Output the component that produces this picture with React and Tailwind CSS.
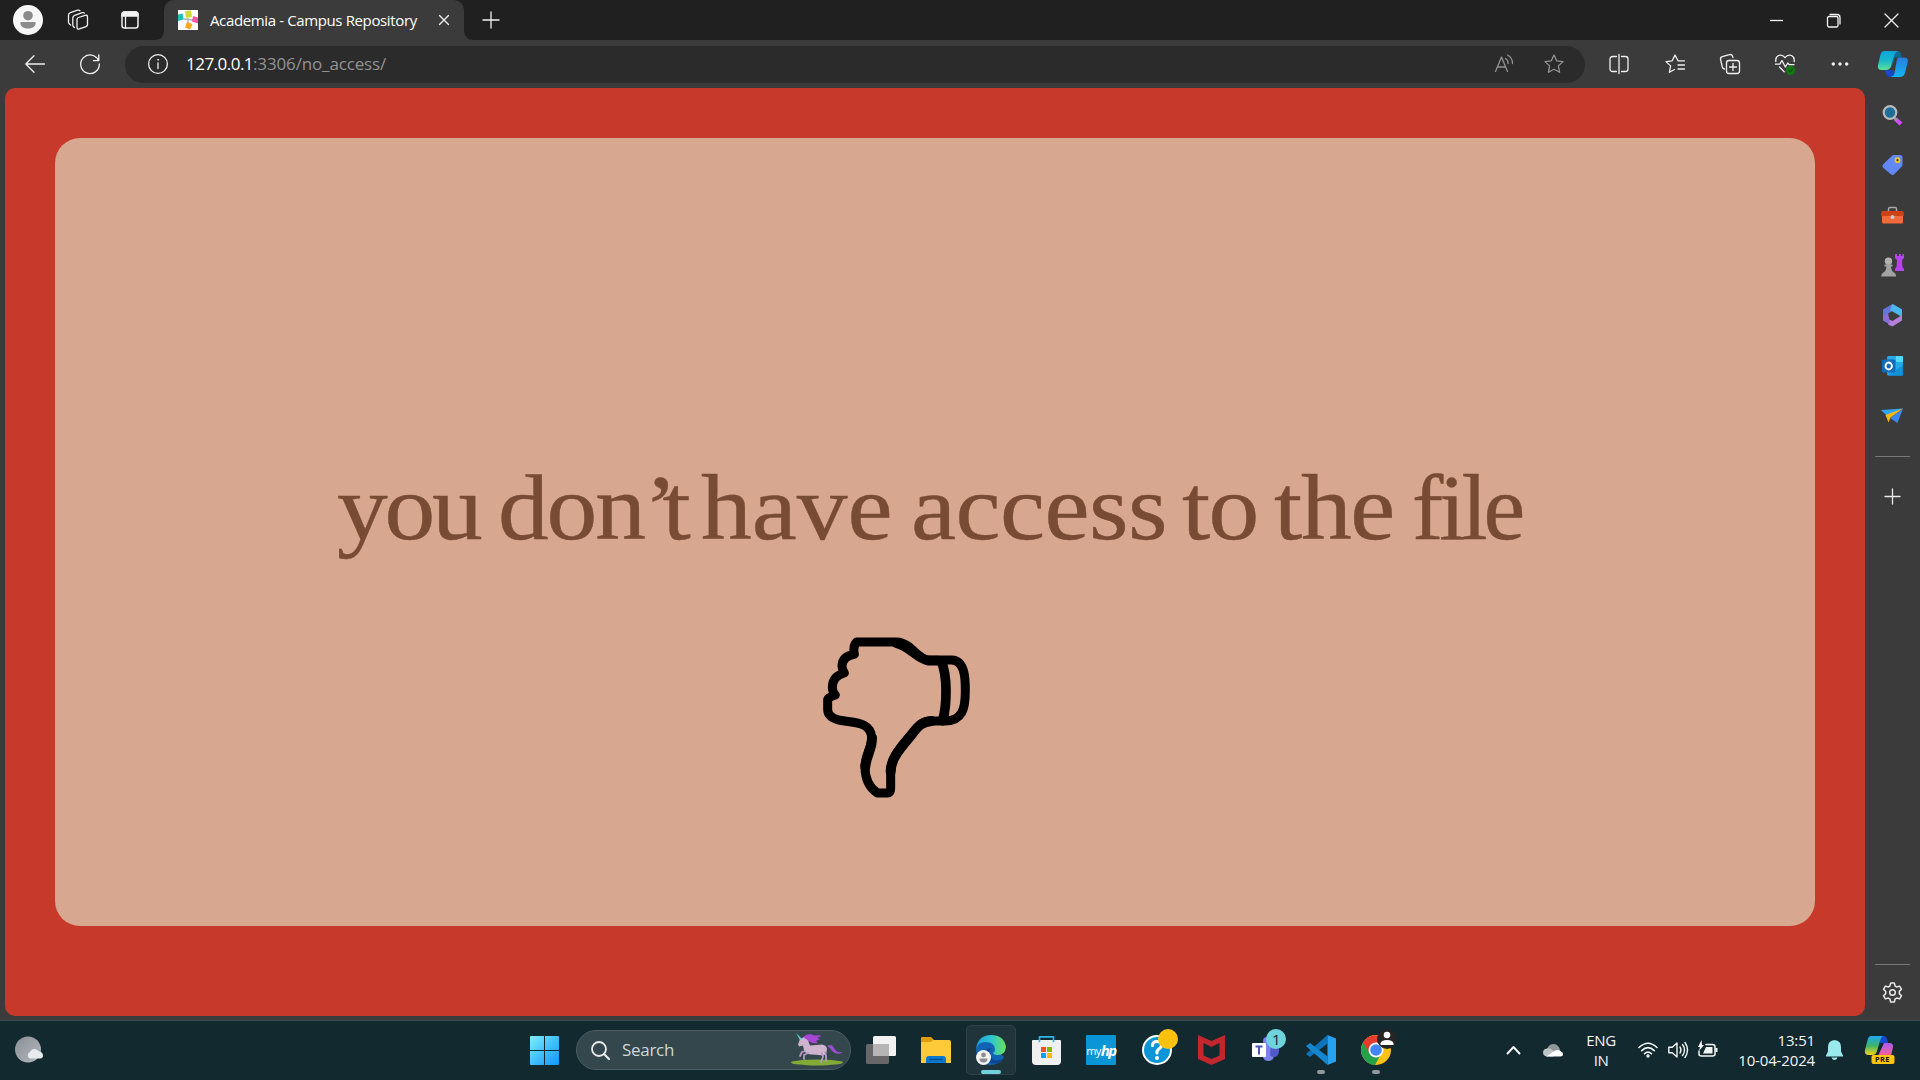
import React from "react";

const Icon = ({ w = 24, h = w, box, className = "", children }) => (
  <svg
    width={w}
    height={h}
    viewBox={box || `0 0 ${w} ${h}`}
    fill="none"
    stroke="currentColor"
    strokeWidth="1.3"
    strokeLinecap="round"
    strokeLinejoin="round"
    className={"block shrink-0 overflow-visible " + className}
  >
    {children}
  </svg>
);

const Slot = ({ className = "", children }) => (
  <div className={"flex shrink-0 items-center justify-center " + className}>{children}</div>
);

function TabStrip() {
  return (
    <header className="flex h-10 shrink-0 bg-[#202020] text-[#f2f2f2]">
      <Slot className="ml-[12px] w-[31px]">
        <Icon w={30}>
          <g stroke="none">
            <circle cx="15" cy="15" r="15" fill="#f7f7f7" />
            <circle cx="15" cy="10.7" r="4.8" fill="#8b8b8b" />
            <path d="M7.5 17h15v1.500c0 3.500-3.500 5-7.500 5s-7.500-1.500-7.500-5z" fill="#8b8b8b" />
          </g>
        </Icon>
      </Slot>
      <Slot className="w-[69px]">
        <Icon w={22}>
          <path d="M10 10.500q0-1.500 1.400-2l6.700-2.200q2.400-.7 2.400 1.700v7.600q0 1.500-1.500 2l-6.600 2.300q-2.400.700-2.400-1.600z" />
          <path d="M7.500 18.500l-.6-.4q-1.100-.7-1.100-2V9q0-2 1.900-2.700l7.500-2.600q1.500-.4 2.200.4" />
          <path d="M3.600 16l-1.100-.9q-1-.8-1-2.100V6.500q0-2.100 1.900-2.800l7.200-2.500q1.500-.4 2.300.5" />
        </Icon>
      </Slot>
      <Slot className="w-[36px]">
        <Icon w={18}>
          <rect x="1" y="1" width="16" height="16" rx="2.500" strokeWidth="1.500" />
          <path d="M1 5V3.500A2.500 2.500 0 0 1 3.500 1h11A2.500 2.500 0 0 1 17 3.500V5z" fill="currentColor" />
          <path d="M4.500 5v12" />
        </Icon>
      </Slot>
      <div className="ml-[6px] flex w-[320px] items-end">
        <Icon w={10} className="text-[#3b3b3b]">
          <path d="M0 10Q10 10 10 0V10z" fill="currentColor" stroke="none" />
        </Icon>
        <div className="flex h-10 w-[300px] items-center rounded-t-[10px] bg-[#3b3b3b] pl-[14px]">
          <Icon w={20}>
            <g stroke="none">
              <path fill="#fff" d="M0 0h20v20H0z" />
              <path d="M6 9l9 1M10 9v4" stroke="#aab4b8" strokeWidth="1.500" />
              <path d="M7 1l6-.5L14 7 8 8z" fill="#cddc39" />
              <path d="M0 4.500l4.500-1 1 6L0 11z" fill="#19c2bd" />
              <path d="M15 6l5 1.500v6l-6-2z" fill="#f857a6" />
              <path d="M9 12l5.500 2-2.500 5.500-5-2z" fill="#f9a61c" />
            </g>
          </Icon>
          <span className="ml-[12px] w-[208px] whitespace-nowrap text-[15px] leading-5 tracking-[-0.37px] text-white">
            Academia - Campus Repository
          </span>
          <Icon w={10} className="ml-[21px]">
            <path d="M.5.500l9 9M9.500.500l-9 9" />
          </Icon>
        </div>
        <Icon w={10} className="text-[#3b3b3b]">
          <path d="M0 0Q0 10 10 10H0z" fill="currentColor" stroke="none" />
        </Icon>
      </div>
      <Slot className="w-[34px]">
        <Icon w={16}>
          <path d="M8 0v16M0 8h16" />
        </Icon>
      </Slot>
      <div className="ml-auto flex">
        <Slot className="w-[56px]">
          <Icon w={13}><path d="M0 6.500h13" strokeLinecap="butt" /></Icon>
        </Slot>
        <Slot className="w-[58px]">
          <Icon w={13}>
            <rect x=".5" y="2.500" width="10.500" height="10.500" rx="1.500" />
            <path d="M3 .5h7q3 0 3 3V10" />
          </Icon>
        </Slot>
        <Slot className="w-[58px]">
          <Icon w={13}><path d="M0 0l13 13M13 0L0 13" /></Icon>
        </Slot>
      </div>
    </header>
  );
}

const star = "M10 1l2.700 5.800 6.300.8-4.600 4.300 1.200 6.400L10 15.200l-5.600 3.100 1.200-6.400L1 7.600l6.300-.8z";

function Toolbar() {
  return (
    <div className="flex h-12 shrink-0 items-center bg-[#3b3b3b] text-[#f0f0f0]">
      <Slot className="ml-[12px] w-[46px]">
        <Icon w={20} h={18}><path d="M19.500 9H1M9 .8L.8 9 9 17.200" /></Icon>
      </Slot>
      <Slot className="ml-[8px] w-[48px]">
        <Icon w={20}>
          <path d="M18.500 6.500A9.300 9.300 0 1 0 19.300 10M18.800 1v5.600h-5.400" />
        </Icon>
      </Slot>
      <div className="ml-[11px] flex h-[37px] w-[1460px] items-center rounded-full bg-[#2b2b2b]">
        <Icon w={20} className="ml-[23px]">
          <circle cx="10" cy="10" r="9.400" />
          <path d="M10 8.800v5.700" />
          <circle cx="10" cy="5.800" r=".5" fill="currentColor" strokeWidth=".8" />
        </Icon>
        <span className="ml-[18px] text-[17px] leading-6 tracking-[-0.52px] text-white">
          127.0.0.1<span className="tracking-[-0.15px] text-[#929292]">:3306/no_access/</span>
        </span>
        <div className="ml-auto mr-[6px] flex text-[#929292]">
          <Slot className="w-[50px]">
            <Icon w={20}>
              <path d="M1.500 17.500L7.500 3l6 14.500M3.400 13h8.200M11.500 4.500q3 2 2.600 5M13.500 1q5.300 3 5 8.500" />
            </Icon>
          </Slot>
          <Slot className="w-[50px]">
            <Icon w={20}><path d={star} /></Icon>
          </Slot>
        </div>
      </div>
      <Slot className="ml-[6px] w-[56px]">
        <Icon w={20}>
          <path d="M7.500 2.500H3.500a2.500 2.500 0 0 0-2.500 2.500v10a2.500 2.500 0 0 0 2.500 2.500h4M12.500 2.500h4A2.500 2.500 0 0 1 19 5v10a2.500 2.500 0 0 1-2.500 2.500h-4M10 .5v19" />
        </Icon>
      </Slot>
      <Slot className="w-[55px]">
        <Icon w={20}>
          <path d="M19.500 6.800H13L10 1 7.200 6.800 1 7.600l4.600 4.300-1.200 6.400 5.100-2.800M13 11h6.500M13 15h6.500" />
        </Icon>
      </Slot>
      <Slot className="w-[55px]">
        <Icon w={20}>
          <rect x="6.500" y="6.500" width="13" height="13" rx="2.500" />
          <path d="M13 9.500v7M9.500 13h7M4.500 15q-1.700-.3-2.200-2L.6 5.600q-.5-2.300 1.700-2.900L9.400.6q2.500-.5 3.200 1.700l.4 1.300" />
        </Icon>
      </Slot>
      <Slot className="w-[55px]">
        <Icon w={20}>
          <path d="M.8 7.500Q.3 3 3.500 1.500 7.300.3 10 3.700 12.700.3 16.500 1.500 19.700 3 19.200 7.500M.5 10.200h4.300L7 6.500l3.300 6.500 2.500-4 1.400 1.700H19M4.500 13l4.700 4.800" />
          <circle cx="15.500" cy="16.500" r="4.500" fill="#107c10" stroke="none" />
          <path d="M13.600 16.600l1.300 1.300 2.600-2.700" stroke="#0a4f0a" />
        </Icon>
      </Slot>
      <Slot className="w-[55px]">
        <Icon w={18} h={4}>
          <g fill="currentColor" stroke="none">
            <circle cx="2.300" cy="2" r="1.700" /><circle cx="9" cy="2" r="1.700" /><circle cx="15.700" cy="2" r="1.700" />
          </g>
        </Icon>
      </Slot>
      <Slot className="w-[51px]">
        <Icon w={30} h={28}>
          <defs>
            <linearGradient id="cpA" x1="0" y1="0" x2="0" y2="1"><stop stopColor="#0aa4dc" /><stop offset=".5" stopColor="#1bb7c8" /><stop offset="1" stopColor="#5fe09a" /></linearGradient>
            <linearGradient id="cpB" x1="0" y1="0" x2="0" y2="1"><stop stopColor="#2a7de1" /><stop offset="1" stopColor="#12b5f5" /></linearGradient>
          </defs>
          <g stroke="none">
            <path d="M9 1h10q3 0 4 3l1 3.500h-7L13 19z" fill="#0a6a96" />
            <path d="M7 20h9l-1 7h-3q-3 0-4-3z" fill="#1648c8" />
            <path d="M6 1h14q-3 1-4 5l-3 10q-1 4-5 4H3q-4-.5-3-5L2.500 4.500Q3.500 1 6 1z" fill="url(#cpA)" />
            <path d="M20.500 7.500H27q3.500.5 2.700 4.500L27 23q-1.300 4-5 4h-9.500q3-.5 4-4l2-11q.5-4 2-4.500z" fill="url(#cpB)" />
          </g>
        </Icon>
      </Slot>
    </div>
  );
}

const sideIcons = [
  <g key="search">
    <path d="M13.500 14l5.500 5" stroke="#d24bfa" strokeWidth="4" strokeLinecap="butt" />
    <path d="M12 12.500l2 2" stroke="#999" strokeWidth="2.500" />
    <circle cx="8" cy="7.500" r="6.300" fill="#1d6f9a" stroke="#b9b9b9" strokeWidth="2.200" />
  </g>,
  <g key="tag" stroke="none">
    <path d="M12 0h6q2.500 0 2.500 2.500v7q0 1.200-1 2.200l-7.300 7.600q-1.700 1.400-3.400 0L1 12.500q-1.200-1.500 0-3L9.500 1.200Q10.500 0 12 0z" fill="#6288f8" />
    <circle cx="15.500" cy="5.200" r="2.900" fill="#f5c518" /><circle cx="15.500" cy="5.200" r="1.100" fill="#283a6d" />
  </g>,
  <g key="case" stroke="none">
    <path d="M6.500 6V4q0-1.500 1.500-1.500h5q1.500 0 1.500 1.500v2" stroke="#aaa" strokeWidth="1.500" />
    <rect x="0" y="8.500" width="21" height="10" rx="1.500" fill="#f06a3c" />
    <path d="M-.8 8q0-2 1.500-2h19.600q1.500 0 1.500 2v3h-22.600z" fill="#cf4117" />
    <circle cx="10.500" cy="12" r="2" fill="#ccc" />
  </g>,
  <g key="games" stroke="none">
    <path d="M13-1h2v2h2v-2h2v2h1.500v-2H22v4l-2 2 .5 7 1.500 2v2h-9v-2l1.500-2L15 5l-2-2z" fill="#b644ef" />
    <circle cx="6.500" cy="6.200" r="3.700" fill="#b0b0b0" />
    <path d="M2.500 9.500h8v2h-1.500q0 4 3 6 2.200 1 2.200 4H-.8q0-3 2.200-4 3-2 3-6H2.500z" fill="#a2a2a2" />
  </g>,
  <g key="m365" stroke="none">
    <path d="M10.500-1L1 4.500v11L6 18V8.500L10.500 6l9.500 5V4.500z" fill="#6178d8" />
    <path d="M10.500-1L20 4.500V12L8 5z" fill="#4bb7ee" />
    <path d="M6 14v5.500l4.500 2L20 15.500V10L10.500 16z" fill="#b57fd9" />
    <path d="M1 12.500v3l6.500 3.800V15L6 8 1 12z" fill="#8a6cd6" />
  </g>,
  <g key="outlook" stroke="none">
    <rect x="5" y="0" width="16" height="19.500" rx="1.500" fill="#28a8ea" />
    <path d="M14 0h6q1 0 1 1v5h-7z" fill="#50d9ff" />
    <path d="M21 9v9.500q0 1-1 1H6l10-7z" fill="#1490df" />
    <rect x="0" y="3.500" width="13.500" height="13" rx="1.500" fill="#0f6cbd" />
    <ellipse cx="6.700" cy="10" rx="3.200" ry="3.500" stroke="#fff" strokeWidth="1.900" />
  </g>,
  <g key="plane" stroke="none">
    <path d="M-1 4L21 2.500 6 11z" fill="#2fa5ef" />
    <path d="M21 2.500L15.500 17 8 12z" fill="#3b87ef" />
    <path d="M21 2.500L3.500 9l3 7.500 2-5z" fill="#f4b912" />
  </g>,
];

function Sidebar() {
  return (
    <aside className="flex w-[55px] shrink-0 flex-col items-center bg-[#3b3b3b] pt-[1.500px] text-[#e8e8e8]">
      <div className="flex flex-col">
        {sideIcons.map((icon, i) => (
          <div key={i} className="flex h-[50.200px] items-center justify-center">
            <Icon w={21} h={20}>{icon}</Icon>
          </div>
        ))}
      </div>
      <div className="mt-[15px] h-px w-[35px] bg-[#777]" />
      <Icon w={15} className="mt-[32px]"><path d="M7.500 0v15M0 7.500h15" /></Icon>
      <div className="mt-auto h-px w-[35px] bg-[#777]" />
      <Icon w={21} className="mb-[17px] mt-[17px]">
        <path d="M8.700 1h3.600l.8 3q.9.400 1.600 1l2.900-.9 1.900 3.200-2.200 2.100v2.200l2.200 2.100-1.900 3.200-2.900-.9q-.7.600-1.600 1l-.8 3H8.700l-.8-3q-.9-.4-1.600-1l-2.900.9-1.900-3.200 2.200-2.100V9.400L1.500 7.300l1.900-3.200 2.900.9q.7-.6 1.600-1z" strokeWidth="1.500" />
        <circle cx="10.500" cy="10.500" r="2.800" strokeWidth="1.500" />
      </Icon>
    </aside>
  );
}

function Page() {
  return (
    <main className="ml-[5px] h-[928px] w-[1860px] shrink-0 rounded-[10px] bg-[#c7392b] px-[50px] pt-[50px]">
      <section className="flex h-[788px] w-[1760px] flex-col rounded-[25px] bg-[#d8a78f]">
        <h1 className="mt-[314px] flex h-[110px] whitespace-nowrap pl-[282px] font-['Liberation_Serif',serif] text-[94px] leading-[110px] text-[#784b34] [-webkit-text-stroke:0.4px_#784b34]">
          <span className="w-[161px] origin-left scale-x-[1.08] tracking-[-3px]">you</span>
          <span className="w-[203px] origin-left scale-x-[1.08] tracking-[-2px]">
            don<span className="tracking-[-14px]">’</span>t
          </span>
          <span className="w-[210px] origin-left scale-x-[1.08]">have</span>
          <span className="w-[271px] origin-left scale-x-[1.08] tracking-[-0.500px]">access</span>
          <span className="w-[92px] origin-left scale-x-[1.08] tracking-[-1.500px]">to</span>
          <span className="w-[138px] origin-left scale-x-[1.08] tracking-[-1.200px]">the</span>
          <span className="tracking-[-4px]">file</span>
        </h1>
        <Icon w={190} box="0 0 570 570" className="ml-[745px] mt-[58px] text-black">
          <g strokeWidth="27">
            <path d="M170 66H290C335 68 350 118 385 120H455C495 122 496 175 496 212C496 265 488 303 435 303H395C362 303 352 322 330 348C300 384 272 415 272 455V505Q272 519 262 519H232C204 500 195 470 195 440C196 400 215 385 215 353C213 300 150 310 112 299C92 293 83 284 83 268V238Q84 232 106 225Q97 214 97 203Q97 168 133 159Q126 148 126 138Q127 108 163 103Q158 78 170 66Z" />
            <path d="M424 124C442 165 442 250 428 302" strokeWidth="29" />
            <path d="M290 70C328 78 350 116 385 122H415" strokeWidth="29" />
            <path d="M395 303C362 305 352 322 330 350C300 386 272 417 272 455M196 440C199 405 216 390 216 353" strokeWidth="30" />
          </g>
        </Icon>
      </section>
    </main>
  );
}

function Unicorn() {
  return (
    <Icon w={53} h={34}>
      <g stroke="none">
        <ellipse cx="27" cy="29.500" rx="26" ry="3" fill="#83a936" />
        <path d="M12 5Q18-1 24 2.500q7-1 7 1-3 .3-4 1.500l3 1-4 2 2 2q-7 1-13-4z" fill="#a846d6" />
        <path d="M37 13q5-3 7 2t9 4q-3 3-8 1-4-2-5-5z" fill="#9b4fd0" />
        <path d="M10 6l4-1.500 4 3 2 5 12-1q5 1 5 5l-1 5-3 1q-7-1-12-1-6-1-7-4l-1-5-4 1-1-2z" fill="#cfb4d0" />
        <path d="M15 18l-3 1-2 4M18 20l-4 2 0 4M32 20l1 4-2 5M35 19l1 4 0 5" stroke="#b79ac6" strokeWidth="1.800" />
        <path d="M6 0l4 7 2-1z" fill="#62d8df" />
      </g>
    </Icon>
  );
}

function Taskbar() {
  return (
    <footer className="flex h-[60px] shrink-0 items-center border-t border-[#3c4b50] bg-[#12292f] pb-px text-[#f3f5f5]">
      <Icon w={30} h={28} className="ml-[14px]">
        <defs>
          <linearGradient id="moon" x1="0" x2="1" y2="1"><stop stopColor="#8b9097" /><stop offset="1" stopColor="#b2b6bd" /></linearGradient>
          <linearGradient id="win" x1="0" x2="1" y2="1"><stop stopColor="#7df1ff" /><stop offset=".5" stopColor="#42c0fb" /><stop offset="1" stopColor="#1296f8" /></linearGradient>
          <linearGradient id="edge" x1="0" x2="1"><stop stopColor="#1a9ee0" /><stop offset=".5" stopColor="#2ec4d3" /><stop offset="1" stopColor="#6ae45a" /></linearGradient>
        </defs>
        <g stroke="none">
          <circle cx="14" cy="13.500" r="13" fill="url(#moon)" />
          <path d="M16 22.500a3.500 3.500 0 0 1 0-6.500 5 5 0 0 1 8.500-1q4.500 1 4.500 4.500 0 3-3 3z" fill="#e9ecef" />
        </g>
      </Icon>
      <Slot className="ml-[473px] w-[55px]">
        <Icon w={29}>
          <path d="M0 1q0-1 1-1h13v14H0zM15 0h13q1 0 1 1v13H15zM0 15h14v14H1q-1 0-1-1zM15 15h14v13q0 1-1 1H15z" fill="url(#win)" stroke="none" />
        </Icon>
      </Slot>
      <div className="ml-[4px] flex h-10 w-[275px] items-center rounded-full border border-[#4c5d63] bg-[#33474d]">
        <Icon w={19} className="ml-[14px] text-[#e6eaea]">
          <circle cx="8" cy="8" r="7" strokeWidth="1.800" /><path d="M13 13l5 5" strokeWidth="2.200" />
        </Icon>
        <span className="ml-[12px] text-[17px] tracking-[-0.3px] text-[#cfd6d7]">Search</span>
        <div className="ml-auto mr-[7px]"><Unicorn /></div>
      </div>
      <div className="ml-[2px] flex">
        <Slot className="w-[56px]">
          <Icon w={30} h={28}>
            <g stroke="none">
              <rect x="0" y="8" width="23" height="20" rx="1.500" fill="#686666" />
              <rect x="7" y="0" width="23" height="20" rx="1.500" fill="#f2f2f2" />
              <path d="M7 8h16v12H8q-1 0-1-1z" fill="#b5b5b5" />
            </g>
          </Icon>
        </Slot>
        <Slot className="w-[54px]">
          <Icon w={30} h={26}>
            <g stroke="none">
              <path d="M0 1q0-1 1-1h9l3 3v4H0z" fill="#df9c0b" />
              <path d="M0 5h10l2-2h16q2 0 2 2v21H0z" fill="#ffca3a" />
              <path d="M5 26v-4q0-3 3-3h14q3 0 3 3v4z" fill="#0c78d0" />
              <path d="M9 22.500h12" stroke="#0a4f90" />
            </g>
          </Icon>
        </Slot>
        <Slot className="relative mx-[3px] h-[50px] w-[50px] rounded-[5px] border border-[#304248] bg-[#20353b]">
          <Icon w={30}>
            <g stroke="none">
              <path d="M0 14Q1 6 8 4q12 0 13 10-1 3 2 4l5 4q-4 8-14 8Q1 29 0 14z" fill="#1164b4" />
              <path d="M8 15q-2 10 7 13 7 2 12-4-10 4-13-3-2-5 2-8z" fill="#0b4594" />
              <path d="M0 14Q2 0 15 0t15 12q-1 8-8 8-4 0-5-2 2-1 2-4-1-7-9-7T0 14z" fill="url(#edge)" />
              <circle cx="7.500" cy="22.500" r="7.500" fill="#f4f4f4" />
              <circle cx="7.500" cy="20" r="2.400" fill="#8d8d8d" />
              <path d="M3.500 23.500h8q0 4-4 4t-4-4z" fill="#8d8d8d" />
            </g>
          </Icon>
          <span className="absolute bottom-0 left-[14px] h-[4px] w-[20px] rounded-full bg-[#6fd3dc]" />
        </Slot>
        <Slot className="w-[54px]">
          <Icon w={29} h={29}>
            <g stroke="none">
              <path d="M0 5q0-1 1-1h27q1 0 1 1v20q0 4-4 4H4q-4 0-4-4z" fill="#f0f0f0" />
              <path d="M9 11h5v5H9z" fill="#f25022" /><path d="M15 11h5v5h-5z" fill="#7fba00" />
              <path d="M9 17h5v5H9z" fill="#00a4ef" /><path d="M15 17h5v5h-5z" fill="#ffb900" />
              <path d="M7.500 5.500V.8h14v4.700" stroke="#2eb4ec" strokeWidth="1.700" />
            </g>
          </Icon>
        </Slot>
        <Slot className="w-[56px]">
          <div className="flex h-[30px] w-[30px] items-center justify-center rounded-[1px] bg-[#0a96d6] text-[11px] leading-none tracking-[-0.6px] text-white">
            my<span className="text-[15px] font-bold italic tracking-[-1.500px]">hp</span>
          </div>
        </Slot>
        <Slot className="w-[55px]">
          <Icon w={30}>
            <g stroke="none">
              <circle cx="15" cy="15" r="14" fill="#0a96d6" stroke="#fff" strokeWidth="2" />
              <path d="M10.500 10.500q0-4 4.500-4t4.500 4q0 2-2.500 3.500t-2 4" stroke="#fff" strokeWidth="3.200" />
              <circle cx="15" cy="23" r="2" fill="#fff" />
              <circle cx="26" cy="4" r="10" fill="#fec10d" />
            </g>
          </Icon>
        </Slot>
        <Slot className="w-[54px]">
          <Icon w={27} h={30}>
            <path d="M0 0l13.500 6L27 0v24l-13.500 6L0 24zM5.500 8v12.500l8 3.500 8-3.500V8l-8 4z" fill="#c1272d" fillRule="evenodd" stroke="none" />
          </Icon>
        </Slot>
        <Slot className="w-[55px]">
          <Icon w={30}>
            <g stroke="none">
              <path d="M13 9h10v12q-1 5-6 5-4 0-5-4z" fill="#7b83eb" />
              <path d="M20 9h8v8q-1 5-5 5-3 0-4-2z" fill="#5059c9" />
              <circle cx="16" cy="6" r="4" fill="#7b83eb" />
              <rect x="1" y="8" width="14" height="14" rx="1" fill="#fff" />
              <path d="M4.500 11.500h7M8 11.500v8" stroke="#4b53bc" strokeWidth="2" strokeLinecap="butt" />
              <circle cx="25" cy="4" r="10" fill="#6fd3dc" />
            </g>
            <text x="21" y="9.500" fontSize="15" fill="#10282d" stroke="none">1</text>
          </Icon>
        </Slot>
        <Slot className="relative h-[50px] w-[55px]">
          <Icon w={30}>
            <g stroke="none">
              <path d="M21.500 0v8.500L4 22 0 19l1-1z" fill="#0e73bb" />
              <path d="M21.500 30v-8.500L4 8 0 11l1 1z" fill="#1686cf" />
              <path d="M21.500 0L30 3.500v23L21.500 30z" fill="#27a2ee" />
            </g>
          </Icon>
          <span className="absolute bottom-[1px] left-[24px] h-[4px] w-[8px] rounded-full bg-[#8f999c]" />
        </Slot>
        <Slot className="relative h-[50px] w-[55px]">
          <Icon w={30}>
            <g stroke="none">
              <circle cx="15" cy="15" r="15" fill="#fbc116" />
              <path d="M15 15L2 7.500A15 15 0 0 0 14 30l6.500-12z" fill="#25a04b" />
              <path d="M15 8h13A15 15 0 0 0 2 7.500L8.500 18z" fill="#e43b2e" />
              <circle cx="15" cy="15" r="7.500" fill="#fff" /><circle cx="15" cy="15" r="5.800" fill="#4285f4" />
              <circle cx="26" cy="4" r="10" fill="#252525" />
              <circle cx="26" cy="0" r="3.300" fill="#fff" />
              <path d="M19.500 10V8.500Q20 5 26 5t6.500 3.500V10z" fill="#fff" />
            </g>
          </Icon>
          <span className="absolute bottom-[1px] left-[24px] h-[4px] w-[8px] rounded-full bg-[#8f999c]" />
        </Slot>
      </div>
      <div className="ml-auto flex items-center">
        <Slot className="w-[40px]">
          <Icon w={13} h={8}><path d="M.5 7.500l6-6.500 6 6.500" strokeWidth="2" /></Icon>
        </Slot>
        <Slot className="w-[40px]">
          <Icon w={20} h={13}>
            <g stroke="none">
              <path d="M4 5Q6 0 10.500 0 15 0 17 5.500L8 11z" fill="#8e9698" />
              <path d="M4 12.500Q0 12 0 8.500 0 5 4 4.500q3-1 6 2l4 3-4 3z" fill="#bfc5c7" />
              <path d="M3 12.500q2-1 6-4 6-5 9-1 2 .5 2 2.500 0 2.500-3 2.500z" fill="#fff" />
            </g>
          </Icon>
        </Slot>
        <div className="flex w-[56px] flex-col items-center text-[15px] leading-[20px] tracking-[-0.4px]">
          <span>ENG</span><span>IN</span>
        </div>
        <Icon w={20} h={16} className="ml-[9px]">
          <path d="M1 5.500q9-8.500 18 0M3.700 8.700q6.300-6 12.600 0M6.500 11.800q3.500-3.400 7 0" strokeWidth="1.600" />
          <circle cx="10" cy="14" r="1.700" fill="currentColor" stroke="none" />
        </Icon>
        <Icon w={20} h={18} className="ml-[10px]">
          <path d="M.8 6.300h3.500L9 2v14l-4.700-4.300H.8zM12 6q2 3 0 6M14.500 3.500q4 5.500 0 11M17 1.500q5 7.500 0 15" strokeWidth="1.400" />
        </Icon>
        <Icon w={20} h={16} className="ml-[10px]">
          <path d="M8 2.500h6.500q2.500 0 2.500 2.500v7q0 2-2.500 2h-11Q1 14 1 12V9" strokeWidth="1.500" />
          <path d="M5 11.500L8 5h6.500v6.500H4zM17.500 6h2v4h-2zM3.500-2L0 5h2L1 9l5-6H4z" fill="currentColor" stroke="none" />
        </Icon>
        <div className="flex w-[97px] flex-col items-end text-[15px] leading-[20px] tracking-[-0.15px]">
          <span>13:51</span><span>10-04-2024</span>
        </div>
        <Icon w={17} h={20} className="ml-[11px] text-[#9aeaec]">
          <path d="M0 15.500l2-4V7q0-6.500 6.500-7Q15 .5 15 7v4.500l2 4v1H0zM5.500 17.500h6q-1 2.500-3 2.500t-3-2.500z" fill="currentColor" stroke="none" />
        </Icon>
        <Icon w={30} h={28} className="ml-[22px] mr-[25px]">
          <defs>
            <linearGradient id="preA" x1="0" y1="0" x2="0" y2="1"><stop stopColor="#20a7f3" /><stop offset=".5" stopColor="#3bb56b" /><stop offset="1" stopColor="#f5d51c" /></linearGradient>
            <linearGradient id="preB" x1="0" y1="0" x2="0" y2="1"><stop stopColor="#a95cf4" /><stop offset="1" stopColor="#fb6190" /></linearGradient>
          </defs>
          <g stroke="none">
            <path d="M13 0h6q3 0 4 7h-8z" fill="#1749cf" />
            <path d="M6 0h12q-2 1-3 5l-3 10q-1 4-5 4H3q-4-.5-3-5L2.500 4Q3.500 0 6 0z" fill="url(#preA)" />
            <path d="M19 7h6q3.500.5 3 4l-2 9H13z" fill="url(#preB)" />
            <rect x="6.500" y="19" width="23" height="9" rx="2" fill="#fdc50c" />
          </g>
          <text x="10" y="26" fontSize="7.500" fontWeight="700" letterSpacing=".3" fill="#111" stroke="none">PRE</text>
        </Icon>
      </div>
    </footer>
  );
}

export default function App() {
  return (
    <div className="flex h-[1080px] w-[1920px] flex-col overflow-hidden bg-[#3b3b3b] font-['Open_Sans','Noto_Sans',sans-serif]">
      <TabStrip />
      <Toolbar />
      <div className="flex h-[932px] shrink-0">
        <Page />
        <Sidebar />
      </div>
      <Taskbar />
    </div>
  );
}
